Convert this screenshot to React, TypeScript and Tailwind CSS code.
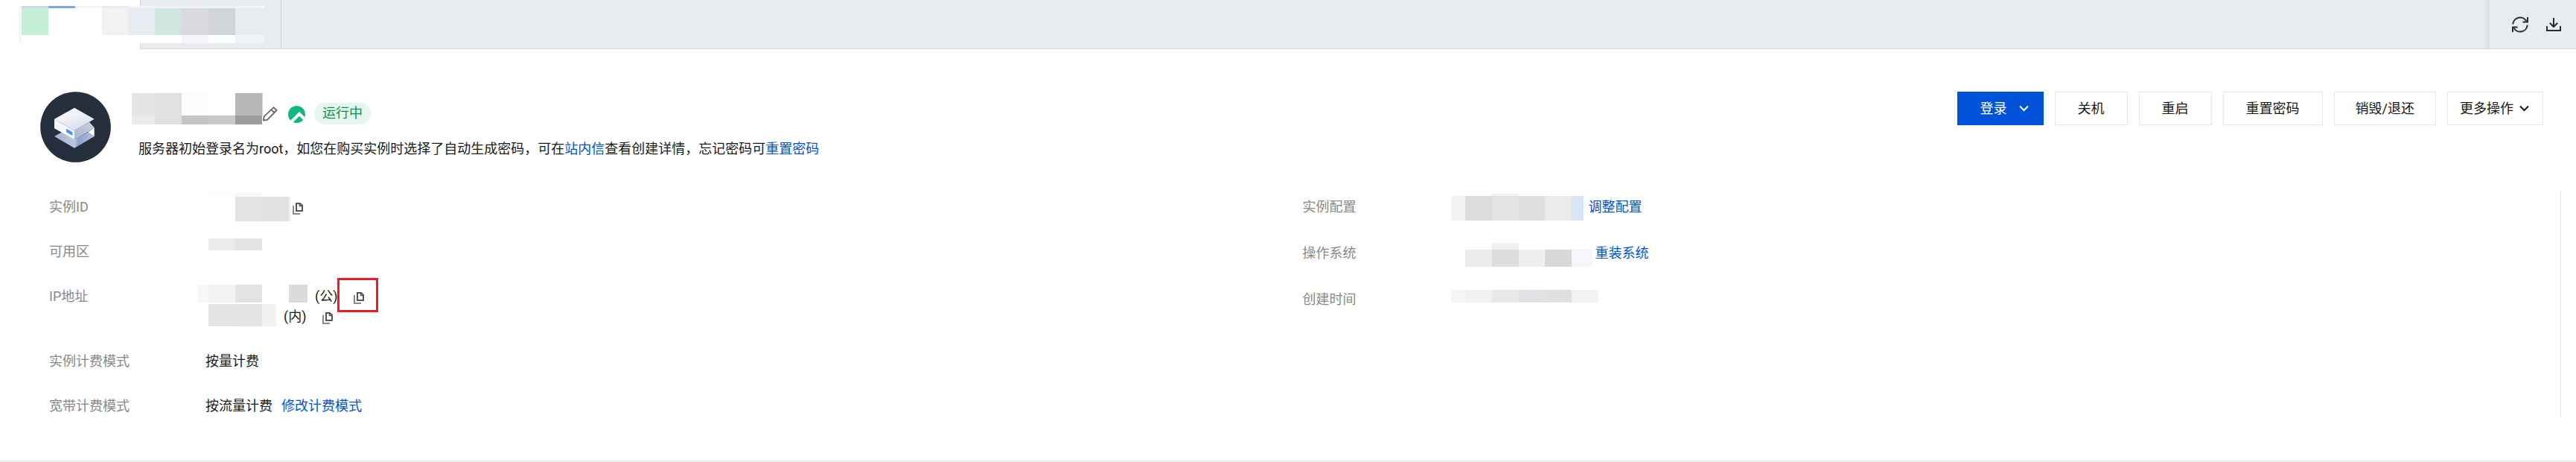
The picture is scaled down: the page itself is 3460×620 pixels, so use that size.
import type { ReactNode } from "react";
import { SiRockylinux } from "react-icons/si";

type Cell = [x: number, y: number, w: number, h: number, fill: string];

/** Pixelated block that hides a private value. */
function Mosaic({ w, h, cells }: { w: number; h: number; cells: Cell[] }) {
  return (
    <svg width={w} height={h} viewBox={`0 0 ${w} ${h}`} shapeRendering="crispEdges" className="block shrink-0" aria-hidden="true">
      {cells.map(([x, y, cw, ch, fill]) => (
        <rect key={`${x}-${y}-${fill}`} x={x} y={y} width={cw} height={ch} fill={fill} />
      ))}
    </svg>
  );
}

const tabCells: Cell[] = [
  [0, 0, 4, 50, "#f4f5f8"],
  [4, 0, 326, 50, "#ffffff"],
  [4, 0, 36, 3, "#c9d8f3"],
  [40, 0, 36, 3, "#80a5e8"],
  [76, 0, 36, 3, "#f2f4fa"],
  [112, 0, 35, 3, "#e6ebf6"],
  [147, 0, 180, 3, "#f0f2f6"],
  [4, 3, 36, 36, "#c5efd5"],
  [112, 3, 35, 36, "#f1f3f3"],
  [147, 3, 36, 36, "#e8ebf1"],
  [183, 3, 36, 36, "#d1e6e0"],
  [219, 3, 36, 36, "#dadade"],
  [255, 3, 36, 36, "#d1d4d9"],
  [291, 3, 39, 36, "#e8ebf0"],
  [219, 39, 36, 11, "#f5f5f8"],
  [255, 39, 36, 11, "#fbfdfc"],
  [291, 39, 39, 11, "#f1f2f7"],
];
const nameCells: Cell[] = [
  [0, 0, 31, 30, "#e5e5e5"],
  [31, 0, 36, 30, "#e1e1e1"],
  [67, 0, 36, 30, "#fcfcfc"],
  [139, 0, 36, 30, "#b7b9b8"],
  [175, 0, 1, 30, "#d5d3d8"],
  [0, 30, 31, 12, "#ebebe9"],
  [31, 30, 36, 12, "#e0e0e0"],
  [67, 30, 36, 12, "#c5c5c5"],
  [103, 30, 36, 12, "#cacaca"],
  [139, 30, 36, 12, "#9e9c9b"],
];
const idCells: Cell[] = [
  [15, 0, 36, 6, "#fdfdfd"],
  [51, 0, 36, 6, "#f7f8f8"],
  [51, 6, 36, 33, "#e3e3e3"],
  [87, 6, 36, 33, "#e1e1e1"],
  [123, 6, 3, 33, "#f3f3f3"],
];
const zoneCells: Cell[] = [
  [15, 0, 36, 16, "#ebebeb"],
  [51, 0, 36, 16, "#e3e3e3"],
];
const publicIpCells: Cell[] = [
  [0, 0, 15, 24, "#f8f8f8"],
  [15, 0, 36, 24, "#f2f2f2"],
  [51, 0, 36, 24, "#e3e3e2"],
  [123, 0, 25, 24, "#dbdbdb"],
];
const privateIpCells: Cell[] = [
  [15, 0, 36, 30, "#e4e4e4"],
  [51, 0, 36, 30, "#e5e5e5"],
  [87, 0, 19, 30, "#f1f1f1"],
];
const configCells: Cell[] = [
  [55, 0, 36, 3, "#f2f2f2"],
  [0, 3, 19, 33, "#f4f4f4"],
  [19, 3, 36, 33, "#dcdcda"],
  [55, 3, 36, 33, "#e3e3e3"],
  [91, 3, 35, 33, "#dfdfdf"],
  [126, 3, 36, 33, "#ebebeb"],
  [162, 3, 16, 33, "#d9e4f7"],
];
const osCells: Cell[] = [
  [19, 4, 36, 9, "#fcfcfc"],
  [55, 4, 36, 9, "#f0f0f0"],
  [19, 13, 36, 23, "#ebebeb"],
  [55, 13, 36, 23, "#dddddd"],
  [91, 13, 35, 23, "#eef0ef"],
  [126, 13, 36, 23, "#d6d9d7"],
  [162, 13, 28, 23, "#f6f7fc"],
];
const timeCells: Cell[] = [
  [0, 1, 19, 17, "#f5f5f5"],
  [19, 1, 36, 17, "#f1f1f1"],
  [55, 1, 36, 17, "#e8eae9"],
  [91, 1, 35, 17, "#e1e2e5"],
  [126, 1, 36, 17, "#e0e0e0"],
  [162, 1, 36, 17, "#f1f3f3"],
];

function ServerAvatar() {
  return (
    <svg viewBox="0 0 285 285" className="size-[95px] shrink-0" aria-hidden="true">
      <defs>
        <linearGradient id="top" x1="0" y1="0" x2="0.6" y2="1">
          <stop offset="0.1" stopColor="#ffffff" />
          <stop offset="1" stopColor="#d9deeb" />
        </linearGradient>
        <linearGradient id="side" x1="0" y1="1" x2="1" y2="0">
          <stop offset="0" stopColor="#a9b7d2" />
          <stop offset="1" stopColor="#c9d2e3" />
        </linearGradient>
        <linearGradient id="base" x1="0" y1="0" x2="1" y2="0">
          <stop offset="0" stopColor="#a3b3d1" />
          <stop offset="0.5" stopColor="#bac6de" />
          <stop offset="0.6" stopColor="#8ea3cb" />
          <stop offset="1" stopColor="#b4c1db" />
        </linearGradient>
      </defs>
      <circle cx="142.5" cy="142.5" r="142" fill="#262f3e" />
      <path d="M57 180 88 163 138 192 194 163 218 180 138 227Z" fill="url(#base)" />
      <path d="M218 145V180L193 163Z" fill="#ffffff" />
      <path d="M138 157 198 122 218 145 194 161 138 193Z" fill="url(#side)" />
      <path d="M57 110 138 157V193L57 148Z" fill="#f4f7fc" />
      <path d="M138 65 218 110 138 157 57 110Z" fill="url(#top)" />
      <path d="M105 149 130 163V177L105 163Z" fill="#4795fb" />
    </svg>
  );
}

function CopyButton({ label, marked = false }: { label: string; marked?: boolean }) {
  return (
    <button type="button" aria-label={label} className="relative block shrink-0">
      <svg width="14" height="20" viewBox="0 0 14 20" fill="none" className="block" aria-hidden="true">
        <path d="M1 8V19H10" stroke="#8a8a8a" strokeWidth="2" />
        <path d="M5 5H10L13 8V15H5Z" stroke="#555555" strokeWidth="2" />
        <path d="M9.5 4V8.5H14" stroke="#555555" strokeWidth="1.4" />
      </svg>
      {marked && (
        <span className="absolute -top-[15px] -right-[19px] -bottom-[11px] -left-[22px] border-3 border-[#ed1c24]" />
      )}
    </button>
  );
}

function Chevron() {
  return (
    <svg width="13" height="9" viewBox="0 0 13 9" fill="none" className="block" aria-hidden="true">
      <path d="M1 1.5 6.5 7 12 1.5" stroke="currentColor" strokeWidth="2" />
    </svg>
  );
}

function ActionButton({ padding = "px-[30px]", children }: { padding?: string; children: ReactNode }) {
  return (
    <button type="button" className={`h-[45px] border border-[#e4e7ed] bg-white shadow-[0_3px_0_#fafafb] ${padding}`}>
      {children}
    </button>
  );
}

function Row({ label, children }: { label: string; children: ReactNode }) {
  return (
    <div className="flex">
      <dt className="w-[199px] shrink-0 text-[#888888]">{label}</dt>
      <dd>{children}</dd>
    </div>
  );
}

function Line({ children }: { children: ReactNode }) {
  return <div className="flex h-[27px] items-center">{children}</div>;
}

function TextLink({ children }: { children: ReactNode }) {
  return (
    <a href="#" className="text-[#0052d9]">
      {children}
    </a>
  );
}

export default function App() {
  return (
    <div className="border-b-2 border-[#ebecf2] bg-white pb-[58px] font-[Roboto,'Noto_Sans_CJK_SC',sans-serif] text-[18px] leading-[27px] text-[#181818]">
      <header className="relative flex h-[66px]">
        <div className="w-[188px] bg-white" />
        <div className="w-[190px] border-r border-b border-l border-[#d3d8df] bg-[#e8ebf0]" />
        <div className="flex-1 border-b border-[#d3d8df] bg-[#e8ebf0]" />
        <div className="w-[7px] border-b border-[#d3d8df] bg-linear-to-r from-[#e5e8ed] to-[#dcdfe5]" />
        <div className="flex items-start gap-6 border-b border-[#d3d8df] bg-[#e8ebf0] pt-[22px] pr-5 pl-[30px]">
          <button type="button" aria-label="刷新">
            <svg width="22" height="22" viewBox="0 0 22 22" fill="none" stroke="#2b2b2b" strokeWidth="2" className="block" aria-hidden="true">
              <path d="M1.2 10.5A9.8 9.8 0 0 1 19.6 6.6" />
              <path d="M20.8 11.5A9.8 9.8 0 0 1 2.4 15.4" />
              <path d="M21 1V7.5H14.5" />
              <path d="M1 21V14.5H7.5" />
            </svg>
          </button>
          <button type="button" aria-label="下载">
            <svg width="20" height="22" viewBox="0 0 20 22" fill="none" stroke="#2b2b2b" strokeWidth="2" className="block" aria-hidden="true">
              <path d="M10 2V14" />
              <path d="M4.8 8.8 10 14 15.2 8.8" />
              <path d="M1 13V19H19V13" />
            </svg>
          </button>
        </div>
        <div className="absolute top-2 left-[25px]">
          <Mosaic w={330} h={50} cells={tabCells} />
        </div>
      </header>

      <section className="flex items-start justify-between pt-[57px] pr-11 pl-[54px]">
        <div className="flex">
          <ServerAvatar />
          <div className="ml-7 pt-0.5">
            <div className="flex items-end">
              <Mosaic w={176} h={42} cells={nameCells} />
              <button type="button" aria-label="编辑名称">
                <svg width="20" height="24" viewBox="0 0 20 24" fill="none" stroke="#666666" strokeWidth="1.8" className="block" aria-hidden="true">
                  <path d="M1 18.5 1.6 13.4 14.6 1.2 18.6 5 6 18Z" />
                  <path d="M11.4 4.2 15.4 8" />
                </svg>
              </button>
              <span className="ml-3.5 pb-0.5">
                <SiRockylinux size={23} color="#10b981" className="block" />
              </span>
              <span className="ml-3 h-[29px] rounded-full bg-[#e5f6ee] px-[11px] text-[#07924f]">运行中</span>
            </div>
            <p className="mt-[19px] pl-[9px]">
              服务器初始登录名为root，如您在购买实例时选择了自动生成密码，可在<TextLink>站内信</TextLink>
              查看创建详情，忘记密码可<TextLink>重置密码</TextLink>
            </p>
          </div>
        </div>
        <div className="flex gap-[15px]">
          <button
            type="button"
            className="flex h-[45px] items-center gap-4 bg-[#0052d9] pr-5 pl-[31px] text-white shadow-[0_3px_0_#f5f7fc]"
          >
            登录
            <Chevron />
          </button>
          <ActionButton>关机</ActionButton>
          <ActionButton>重启</ActionButton>
          <ActionButton>重置密码</ActionButton>
          <ActionButton padding="px-7">销毁/退还</ActionButton>
          <button type="button" className="flex h-[45px] items-center gap-2 border border-[#e4e7ed] bg-white pr-[18px] pl-4">
            更多操作
            <Chevron />
          </button>
        </div>
      </section>

      <section className="mt-[37px] mr-5 ml-[60px] grid grid-cols-2 border-r border-[#e4e4ea] pt-[9px] pb-0.5">
        <dl className="flex flex-col gap-[33px] pl-1.5">
          <Row label="实例ID">
            <Line>
              <Mosaic w={128} h={40} cells={idCells} />
              <CopyButton label="复制实例ID" />
            </Line>
          </Row>
          <Row label="可用区">
            <Line>
              <Mosaic w={87} h={36} cells={zoneCells} />
            </Line>
          </Row>
          <Row label="IP地址">
            <Line>
              <Mosaic w={148} h={32} cells={publicIpCells} />
              <span className="mr-[22px] ml-2.5">(公)</span>
              <CopyButton label="复制公网IP" marked />
            </Line>
            <Line>
              <Mosaic w={106} h={34} cells={privateIpCells} />
              <span className="mr-[22px] ml-2.5">(内)</span>
              <CopyButton label="复制内网IP" />
            </Line>
          </Row>
          <Row label="实例计费模式">
            <div className="pl-[11px]">按量计费</div>
          </Row>
          <Row label="宽带计费模式">
            <div className="flex gap-3 pl-[11px]">
              按流量计费
              <TextLink>修改计费模式</TextLink>
            </div>
          </Row>
        </dl>
        <dl className="flex flex-col gap-[35px]">
          <Row label="实例配置">
            <Line>
              <Mosaic w={185} h={36} cells={configCells} />
              <TextLink>调整配置</TextLink>
            </Line>
          </Row>
          <Row label="操作系统">
            <Line>
              <Mosaic w={194} h={36} cells={osCells} />
              <TextLink>重装系统</TextLink>
            </Line>
          </Row>
          <Row label="创建时间">
            <Line>
              <Mosaic w={198} h={27} cells={timeCells} />
            </Line>
          </Row>
        </dl>
      </section>
    </div>
  );
}
